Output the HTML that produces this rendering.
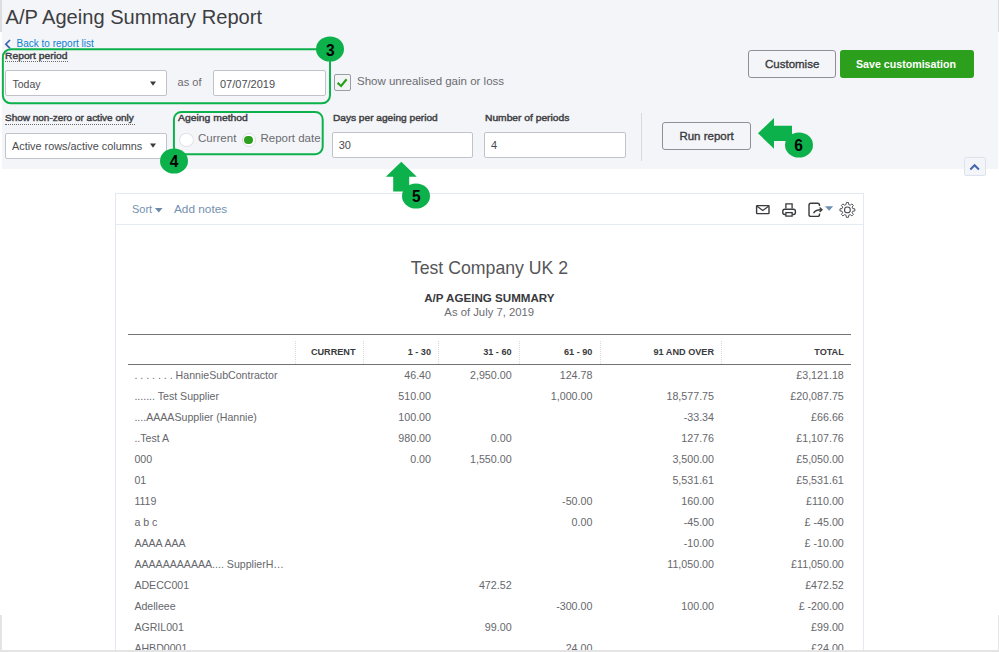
<!DOCTYPE html>
<html><head><meta charset="utf-8"><title>A/P Ageing Summary Report</title>
<style>
html,body{margin:0;padding:0;width:999px;height:652px;overflow:hidden;background:#fff;}
body{position:relative;font-family:"Liberation Sans", sans-serif;}
.t{position:absolute;line-height:1;white-space:pre;}
.r{position:absolute;}
svg.r{overflow:visible;}
</style></head><body>
<div class="r" style="left:0.00px;top:0.00px;width:2.00px;height:32.00px;background:#dedede"></div>
<div class="r" style="left:997.70px;top:0.00px;width:1.30px;height:32.00px;background:#dedede"></div>
<div class="r" style="left:2.00px;top:0.00px;width:996.00px;height:169.00px;background:#f4f5f8"></div>
<div class="t" style="left:5.50px;top:7.29px;font-size:20.1px;font-weight:400;color:#3d3e42;">A/P Ageing Summary Report</div>
<svg class="r" style="left:3px;top:38px" width="10" height="12" viewBox="0 0 10 12"><polyline points="7,2 2.8,6.2 7,10.4" fill="none" stroke="#3f64b0" stroke-width="1.7"/></svg>
<div class="t" style="left:16.50px;top:39.34px;font-size:10px;font-weight:400;color:#0b7fd0;">Back to report list</div>
<div class="t" style="left:5.00px;top:50.92px;font-size:9.9px;font-weight:400;color:#404145;-webkit-text-stroke:0.45px #404145;transform:scaleX(1.043);transform-origin:0 0">Report period</div>
<div class="r" style="left:5.00px;top:61.00px;width:63.00px;height:1.00px;border-top:1px dotted #6a6a6a"></div>
<div class="r" style="left:5.00px;top:70.00px;width:162.00px;height:26.00px;background:#fff;border:1px solid #c0c3c9;border-radius:2px;box-sizing:border-box"></div>
<div class="t" style="left:12.50px;top:78.51px;font-size:10.5px;font-weight:400;color:#4a4b50;">Today</div>
<svg class="r" style="left:148px;top:80px" width="10" height="8"><polygon points="2,1.5 8,1.5 5,5.8" fill="#393a3d"/></svg>
<div class="t" style="left:177.60px;top:76.89px;font-size:11px;font-weight:400;color:#6b6c72;">as of</div>
<div class="r" style="left:213.00px;top:70.00px;width:112.50px;height:26.00px;background:#fff;border:1px solid #c0c3c9;border-radius:2px;box-sizing:border-box"></div>
<div class="t" style="left:220.00px;top:78.89px;font-size:11px;font-weight:400;color:#4a4b50;">07/07/2019</div>
<div class="r" style="left:334.00px;top:74.00px;width:16.50px;height:17.00px;background:#f3f4f6;border:1px solid #9a9da3;border-radius:2px;box-sizing:border-box"></div>
<svg class="r" style="left:334px;top:74px" width="17" height="17" viewBox="0 0 17 17"><polyline points="3.6,8.9 7.1,12 12.6,5.2" fill="none" stroke="#2ca01c" stroke-width="2.2"/></svg>
<div class="t" style="left:357.00px;top:75.87px;font-size:11.5px;font-weight:400;color:#6b6c72;">Show unrealised gain or loss</div>
<svg class="r" style="left:0;top:0" width="999" height="652"><rect x="2.85" y="49.2" width="327.15" height="54.1" rx="8" fill="none" stroke="#0db14b" stroke-width="2"/></svg>
<div class="t" style="left:5.00px;top:113.02px;font-size:9.9px;font-weight:400;color:#404145;-webkit-text-stroke:0.45px #404145;transform:scaleX(1.011);transform-origin:0 0">Show non-zero or active only</div>
<div class="r" style="left:5.00px;top:124.00px;width:130.00px;height:1.00px;border-top:1px dotted #6a6a6a"></div>
<div class="r" style="left:5.00px;top:133.00px;width:162.00px;height:25.50px;background:#fff;border:1px solid #c0c3c9;border-radius:2px;box-sizing:border-box"></div>
<div class="t" style="left:12.00px;top:140.82px;font-size:10.85px;font-weight:400;color:#4a4b50;">Active rows/active columns</div>
<svg class="r" style="left:148px;top:142px" width="10" height="8"><polygon points="2,1.5 8,1.5 5,5.8" fill="#393a3d"/></svg>
<svg class="r" style="left:0;top:0" width="999" height="652"><rect x="173.9" y="111.9" width="148.8" height="42.3" rx="7.5" fill="none" stroke="#0db14b" stroke-width="2"/></svg>
<div class="t" style="left:178.00px;top:113.22px;font-size:9.9px;font-weight:400;color:#404145;-webkit-text-stroke:0.45px #404145;transform:scaleX(1.052);transform-origin:0 0">Ageing method</div>
<div class="r" style="left:179.00px;top:133.00px;width:14.50px;height:14.00px;background:#fff;border:1px solid #e2e3e6;border-radius:50%;box-sizing:border-box"></div>
<div class="t" style="left:198.00px;top:133.37px;font-size:11.5px;font-weight:400;color:#6b6c72;">Current</div>
<div class="r" style="left:241.50px;top:133.00px;width:14.00px;height:14.00px;background:#fff;border:1px solid #dcdde0;border-radius:50%;box-sizing:border-box"></div>
<div class="r" style="left:244.30px;top:135.80px;width:8.40px;height:8.40px;background:#2ca01c;border-radius:50%"></div>
<div class="t" style="left:260.50px;top:133.37px;font-size:11.5px;font-weight:400;color:#6b6c72;">Report date</div>
<div class="t" style="left:332.60px;top:113.02px;font-size:9.9px;font-weight:400;color:#404145;-webkit-text-stroke:0.45px #404145;transform:scaleX(1.025);transform-origin:0 0">Days per ageing period</div>
<div class="r" style="left:332.00px;top:132.30px;width:141.00px;height:25.70px;background:#fff;border:1px solid #c0c3c9;border-radius:2px;box-sizing:border-box"></div>
<div class="t" style="left:338.70px;top:139.59px;font-size:11px;font-weight:400;color:#4a4b50;">30</div>
<div class="t" style="left:485.00px;top:113.02px;font-size:9.9px;font-weight:400;color:#404145;-webkit-text-stroke:0.45px #404145;transform:scaleX(1.038);transform-origin:0 0">Number of periods</div>
<div class="r" style="left:484.40px;top:132.30px;width:141.20px;height:25.70px;background:#fff;border:1px solid #c0c3c9;border-radius:2px;box-sizing:border-box"></div>
<div class="t" style="left:491.00px;top:139.59px;font-size:11px;font-weight:400;color:#4a4b50;">4</div>
<div class="r" style="left:640.50px;top:113.00px;width:1.50px;height:47.50px;background:#d6d9de"></div>
<div class="r" style="left:661.70px;top:122.00px;width:89.70px;height:27.70px;border:1px solid #8d9096;border-radius:3px;box-sizing:border-box;background:#f4f5f8"></div>
<div class="t" style="left:679.40px;top:130.67px;font-size:11.5px;font-weight:400;color:#393a3d;-webkit-text-stroke:0.35px #393a3d">Run report</div>
<div class="r" style="left:747.50px;top:50.00px;width:88.80px;height:27.60px;border:1px solid #8d9096;border-radius:3px;box-sizing:border-box;background:#f4f5f8"></div>
<div class="t" style="left:765.00px;top:58.87px;font-size:11.5px;font-weight:400;color:#393a3d;-webkit-text-stroke:0.35px #393a3d">Customise</div>
<div class="r" style="left:839.50px;top:50.00px;width:134.30px;height:27.60px;background:#2ca01c;border-radius:3px"></div>
<div class="t" style="left:856.00px;top:58.88px;font-size:10.65px;font-weight:700;color:#fff;">Save customisation</div>
<div class="r" style="left:964.40px;top:157.30px;width:21.20px;height:18.90px;border:1px solid #dde3ee;border-radius:2px;box-sizing:border-box;background:#f4f5f8"></div>
<svg class="r" style="left:964px;top:157px" width="22" height="19"><polyline points="6.3,12.5 10.6,8.2 14.9,12.5" fill="none" stroke="#4466b0" stroke-width="2"/></svg>
<div class="r" style="left:115.40px;top:193.00px;width:748.40px;height:507.00px;border:1px solid #e3e9f1;box-sizing:border-box;background:#fff"></div>
<div class="r" style="left:116.40px;top:223.80px;width:746.40px;height:1.00px;background:#e5ebf2"></div>
<div class="t" style="left:132.00px;top:204.29px;font-size:11px;font-weight:400;color:#7590b0;">Sort</div>
<svg class="r" style="left:154px;top:207px" width="10" height="7"><polygon points="1,1 8.5,1 4.75,5.5" fill="#6a88aa"/></svg>
<div class="t" style="left:174.00px;top:203.61px;font-size:11.8px;font-weight:400;color:#7590b0;">Add notes</div>
<svg class="r" style="left:754px;top:202px" width="110" height="18" viewBox="754 202 110 18"><rect x="756.6" y="205.6" width="12.4" height="8" rx="0.5" fill="none" stroke="#393a3d" stroke-width="1.4"/><polyline points="757,206.3 762.8,210.6 768.6,206.3" fill="none" stroke="#393a3d" stroke-width="1.2"/><path d="M785.9,208.6 L785.9,203.9 L792.1,203.9 L792.1,208.6" fill="none" stroke="#393a3d" stroke-width="1.3"/><rect x="782.8" y="209.3" width="12.6" height="5.2" rx="2" fill="none" stroke="#393a3d" stroke-width="1.4"/><rect x="785.9" y="212.6" width="6.2" height="3.5" fill="#fff" stroke="#393a3d" stroke-width="1.3"/><path d="M819.5,206 L819.5,205.2 Q819.5,203.2 817.5,203.2 L811,203.2 Q809,203.2 809,205.2 L809,214.4 Q809,216.4 811,216.4 L817.5,216.4 Q819.5,216.4 819.5,214.4 L819.5,213.6" fill="none" stroke="#393a3d" stroke-width="1.4"/><path d="M813.6,213.2 Q815,209.8 821.2,209.8" fill="none" stroke="#393a3d" stroke-width="1.4"/><polyline points="819.6,207.6 822,209.8 819.6,212" fill="none" stroke="#393a3d" stroke-width="1.3"/><polygon points="825,206.3 833.2,206.3 829.1,210.8" fill="#6d8fb3"/></svg>
<svg class="r" style="left:0;top:0" width="999" height="652"><polygon points="846.07,204.56 846.36,202.47 848.44,202.47 848.73,204.56 850.23,205.19 851.91,203.91 853.39,205.39 852.11,207.07 852.74,208.57 854.83,208.86 854.83,210.94 852.74,211.23 852.11,212.73 853.39,214.41 851.91,215.89 850.23,214.61 848.73,215.24 848.44,217.33 846.36,217.33 846.07,215.24 844.57,214.61 842.89,215.89 841.41,214.41 842.69,212.73 842.06,211.23 839.97,210.94 839.97,208.86 842.06,208.57 842.69,207.07 841.41,205.39 842.89,203.91 844.57,205.19" fill="none" stroke="#4a4b50" stroke-width="0.95" stroke-linejoin="round"/><circle cx="847.4" cy="209.9" r="2.9" fill="none" stroke="#4a4b50" stroke-width="1.1"/></svg>
<div class="t" style="left:289.50px;top:260.32px;width:400px;text-align:center;font-size:17.7px;font-weight:400;color:#555659;">Test Company UK 2</div>
<div class="t" style="left:289.35px;top:291.78px;width:400px;text-align:center;font-size:11.6px;font-weight:700;color:#393a3d;">A/P AGEING SUMMARY</div>
<div class="t" style="left:289.25px;top:307.03px;width:400px;text-align:center;font-size:11.3px;font-weight:400;color:#6b6c72;">As of July 7, 2019</div>
<div class="r" style="left:128.00px;top:334.00px;width:723.00px;height:1.30px;background:#737373"></div>
<div class="r" style="left:128.00px;top:364.00px;width:723.00px;height:1.30px;background:#737373"></div>
<div class="r" style="left:295.40px;top:341.00px;width:1.00px;height:22.50px;border-left:1px dotted #d9d9d9;box-sizing:border-box"></div>
<div class="r" style="left:362.70px;top:341.00px;width:1.00px;height:22.50px;border-left:1px dotted #d9d9d9;box-sizing:border-box"></div>
<div class="r" style="left:437.70px;top:341.00px;width:1.00px;height:22.50px;border-left:1px dotted #d9d9d9;box-sizing:border-box"></div>
<div class="r" style="left:518.80px;top:341.00px;width:1.00px;height:22.50px;border-left:1px dotted #d9d9d9;box-sizing:border-box"></div>
<div class="r" style="left:599.60px;top:341.00px;width:1.00px;height:22.50px;border-left:1px dotted #d9d9d9;box-sizing:border-box"></div>
<div class="r" style="left:721.30px;top:341.00px;width:1.00px;height:22.50px;border-left:1px dotted #d9d9d9;box-sizing:border-box"></div>
<div class="t" style="left:205.50px;top:348.05px;width:150px;text-align:right;font-size:9.15px;font-weight:700;color:#393a3d;">CURRENT</div>
<div class="t" style="left:281.00px;top:348.05px;width:150px;text-align:right;font-size:9.15px;font-weight:700;color:#393a3d;">1 - 30</div>
<div class="t" style="left:361.60px;top:348.05px;width:150px;text-align:right;font-size:9.15px;font-weight:700;color:#393a3d;">31 - 60</div>
<div class="t" style="left:442.40px;top:348.05px;width:150px;text-align:right;font-size:9.15px;font-weight:700;color:#393a3d;">61 - 90</div>
<div class="t" style="left:564.00px;top:348.05px;width:150px;text-align:right;font-size:9.15px;font-weight:700;color:#393a3d;">91 AND OVER</div>
<div class="t" style="left:693.80px;top:348.05px;width:150px;text-align:right;font-size:9.15px;font-weight:700;color:#393a3d;">TOTAL</div>
<div class="t" style="left:134.40px;top:370.23px;font-size:10.6px;font-weight:400;color:#66676c;">. . . . . . . HannieSubContractor</div>
<div class="t" style="left:311.00px;top:370.14px;width:120px;text-align:right;font-size:10.7px;font-weight:400;color:#66676c;">46.40</div>
<div class="t" style="left:391.60px;top:370.14px;width:120px;text-align:right;font-size:10.7px;font-weight:400;color:#66676c;">2,950.00</div>
<div class="t" style="left:472.40px;top:370.14px;width:120px;text-align:right;font-size:10.7px;font-weight:400;color:#66676c;">124.78</div>
<div class="t" style="left:723.80px;top:370.14px;width:120px;text-align:right;font-size:10.7px;font-weight:400;color:#66676c;">£3,121.18</div>
<div class="t" style="left:134.40px;top:391.23px;font-size:10.6px;font-weight:400;color:#66676c;">....... Test Supplier</div>
<div class="t" style="left:311.00px;top:391.14px;width:120px;text-align:right;font-size:10.7px;font-weight:400;color:#66676c;">510.00</div>
<div class="t" style="left:472.40px;top:391.14px;width:120px;text-align:right;font-size:10.7px;font-weight:400;color:#66676c;">1,000.00</div>
<div class="t" style="left:594.00px;top:391.14px;width:120px;text-align:right;font-size:10.7px;font-weight:400;color:#66676c;">18,577.75</div>
<div class="t" style="left:723.80px;top:391.14px;width:120px;text-align:right;font-size:10.7px;font-weight:400;color:#66676c;">£20,087.75</div>
<div class="t" style="left:134.40px;top:412.23px;font-size:10.6px;font-weight:400;color:#66676c;">....AAAASupplier (Hannie)</div>
<div class="t" style="left:311.00px;top:412.14px;width:120px;text-align:right;font-size:10.7px;font-weight:400;color:#66676c;">100.00</div>
<div class="t" style="left:594.00px;top:412.14px;width:120px;text-align:right;font-size:10.7px;font-weight:400;color:#66676c;">-33.34</div>
<div class="t" style="left:723.80px;top:412.14px;width:120px;text-align:right;font-size:10.7px;font-weight:400;color:#66676c;">£66.66</div>
<div class="t" style="left:134.40px;top:433.23px;font-size:10.6px;font-weight:400;color:#66676c;">..Test A</div>
<div class="t" style="left:311.00px;top:433.14px;width:120px;text-align:right;font-size:10.7px;font-weight:400;color:#66676c;">980.00</div>
<div class="t" style="left:391.60px;top:433.14px;width:120px;text-align:right;font-size:10.7px;font-weight:400;color:#66676c;">0.00</div>
<div class="t" style="left:594.00px;top:433.14px;width:120px;text-align:right;font-size:10.7px;font-weight:400;color:#66676c;">127.76</div>
<div class="t" style="left:723.80px;top:433.14px;width:120px;text-align:right;font-size:10.7px;font-weight:400;color:#66676c;">£1,107.76</div>
<div class="t" style="left:134.40px;top:454.23px;font-size:10.6px;font-weight:400;color:#66676c;">000</div>
<div class="t" style="left:311.00px;top:454.14px;width:120px;text-align:right;font-size:10.7px;font-weight:400;color:#66676c;">0.00</div>
<div class="t" style="left:391.60px;top:454.14px;width:120px;text-align:right;font-size:10.7px;font-weight:400;color:#66676c;">1,550.00</div>
<div class="t" style="left:594.00px;top:454.14px;width:120px;text-align:right;font-size:10.7px;font-weight:400;color:#66676c;">3,500.00</div>
<div class="t" style="left:723.80px;top:454.14px;width:120px;text-align:right;font-size:10.7px;font-weight:400;color:#66676c;">£5,050.00</div>
<div class="t" style="left:134.40px;top:475.23px;font-size:10.6px;font-weight:400;color:#66676c;">01</div>
<div class="t" style="left:594.00px;top:475.14px;width:120px;text-align:right;font-size:10.7px;font-weight:400;color:#66676c;">5,531.61</div>
<div class="t" style="left:723.80px;top:475.14px;width:120px;text-align:right;font-size:10.7px;font-weight:400;color:#66676c;">£5,531.61</div>
<div class="t" style="left:134.40px;top:496.23px;font-size:10.6px;font-weight:400;color:#66676c;">1119</div>
<div class="t" style="left:472.40px;top:496.14px;width:120px;text-align:right;font-size:10.7px;font-weight:400;color:#66676c;">-50.00</div>
<div class="t" style="left:594.00px;top:496.14px;width:120px;text-align:right;font-size:10.7px;font-weight:400;color:#66676c;">160.00</div>
<div class="t" style="left:723.80px;top:496.14px;width:120px;text-align:right;font-size:10.7px;font-weight:400;color:#66676c;">£110.00</div>
<div class="t" style="left:134.40px;top:517.23px;font-size:10.6px;font-weight:400;color:#66676c;">a b c</div>
<div class="t" style="left:472.40px;top:517.14px;width:120px;text-align:right;font-size:10.7px;font-weight:400;color:#66676c;">0.00</div>
<div class="t" style="left:594.00px;top:517.14px;width:120px;text-align:right;font-size:10.7px;font-weight:400;color:#66676c;">-45.00</div>
<div class="t" style="left:723.80px;top:517.14px;width:120px;text-align:right;font-size:10.7px;font-weight:400;color:#66676c;">£ -45.00</div>
<div class="t" style="left:134.40px;top:538.23px;font-size:10.6px;font-weight:400;color:#66676c;">AAAA AAA</div>
<div class="t" style="left:594.00px;top:538.14px;width:120px;text-align:right;font-size:10.7px;font-weight:400;color:#66676c;">-10.00</div>
<div class="t" style="left:723.80px;top:538.14px;width:120px;text-align:right;font-size:10.7px;font-weight:400;color:#66676c;">£ -10.00</div>
<div class="t" style="left:134.40px;top:559.23px;font-size:10.6px;font-weight:400;color:#66676c;">AAAAAAAAAAA.... SupplierH…</div>
<div class="t" style="left:594.00px;top:559.14px;width:120px;text-align:right;font-size:10.7px;font-weight:400;color:#66676c;">11,050.00</div>
<div class="t" style="left:723.80px;top:559.14px;width:120px;text-align:right;font-size:10.7px;font-weight:400;color:#66676c;">£11,050.00</div>
<div class="t" style="left:134.40px;top:580.23px;font-size:10.6px;font-weight:400;color:#66676c;">ADECC001</div>
<div class="t" style="left:391.60px;top:580.14px;width:120px;text-align:right;font-size:10.7px;font-weight:400;color:#66676c;">472.52</div>
<div class="t" style="left:723.80px;top:580.14px;width:120px;text-align:right;font-size:10.7px;font-weight:400;color:#66676c;">£472.52</div>
<div class="t" style="left:134.40px;top:601.23px;font-size:10.6px;font-weight:400;color:#66676c;">Adelleee</div>
<div class="t" style="left:472.40px;top:601.14px;width:120px;text-align:right;font-size:10.7px;font-weight:400;color:#66676c;">-300.00</div>
<div class="t" style="left:594.00px;top:601.14px;width:120px;text-align:right;font-size:10.7px;font-weight:400;color:#66676c;">100.00</div>
<div class="t" style="left:723.80px;top:601.14px;width:120px;text-align:right;font-size:10.7px;font-weight:400;color:#66676c;">£ -200.00</div>
<div class="t" style="left:134.40px;top:622.23px;font-size:10.6px;font-weight:400;color:#66676c;">AGRIL001</div>
<div class="t" style="left:391.60px;top:622.14px;width:120px;text-align:right;font-size:10.7px;font-weight:400;color:#66676c;">99.00</div>
<div class="t" style="left:723.80px;top:622.14px;width:120px;text-align:right;font-size:10.7px;font-weight:400;color:#66676c;">£99.00</div>
<div class="t" style="left:134.40px;top:643.23px;font-size:10.6px;font-weight:400;color:#66676c;">AHBD0001</div>
<div class="t" style="left:472.40px;top:643.14px;width:120px;text-align:right;font-size:10.7px;font-weight:400;color:#66676c;">24.00</div>
<div class="t" style="left:723.80px;top:643.14px;width:120px;text-align:right;font-size:10.7px;font-weight:400;color:#66676c;">£24.00</div>
<svg class="r" style="left:0;top:0" width="999" height="652"><polygon points="401.3,161.8 416.8,176.8 409.2,176.8 409.2,191.5 393.2,191.5 393.2,176.8 385.8,176.8" fill="#0db14b"/><polygon points="758,133.3 774,118 774,125.7 792,125.7 792,141 774,141 774,148.8" fill="#0db14b"/></svg>
<svg class="r" style="left:315.30px;top:35.30px" width="30" height="28"><ellipse cx="15" cy="14" rx="14" ry="12.6" fill="#0db14b"/></svg>
<div class="t" style="left:315.30px;top:42.78px;width:30px;text-align:center;font-size:15.5px;font-weight:700;color:#000;transform:scaleY(1.12);transform-origin:50% 80%">3</div>
<svg class="r" style="left:159.00px;top:147.00px" width="30" height="28"><ellipse cx="15" cy="14" rx="14" ry="12.6" fill="#0db14b"/></svg>
<div class="t" style="left:159.00px;top:154.48px;width:30px;text-align:center;font-size:15.5px;font-weight:700;color:#000;transform:scaleY(1.12);transform-origin:50% 80%">4</div>
<svg class="r" style="left:401.20px;top:181.50px" width="30" height="28"><ellipse cx="15" cy="14" rx="14" ry="12.6" fill="#0db14b"/></svg>
<div class="t" style="left:401.20px;top:188.98px;width:30px;text-align:center;font-size:15.5px;font-weight:700;color:#000;transform:scaleY(1.12);transform-origin:50% 80%">5</div>
<svg class="r" style="left:783.60px;top:130.60px" width="30" height="28"><ellipse cx="15" cy="14" rx="14" ry="12.6" fill="#0db14b"/></svg>
<div class="t" style="left:783.60px;top:138.08px;width:30px;text-align:center;font-size:15.5px;font-weight:700;color:#000;transform:scaleY(1.12);transform-origin:50% 80%">6</div>
<div class="r" style="left:0.00px;top:615.00px;width:2.00px;height:37.00px;background:#e4e4e4"></div>
<div class="r" style="left:997.70px;top:615.00px;width:1.30px;height:37.00px;background:#e4e4e4"></div>
<div class="r" style="left:0.00px;top:650.00px;width:999.00px;height:2.00px;background:#e4e4e4"></div>
</body></html>
